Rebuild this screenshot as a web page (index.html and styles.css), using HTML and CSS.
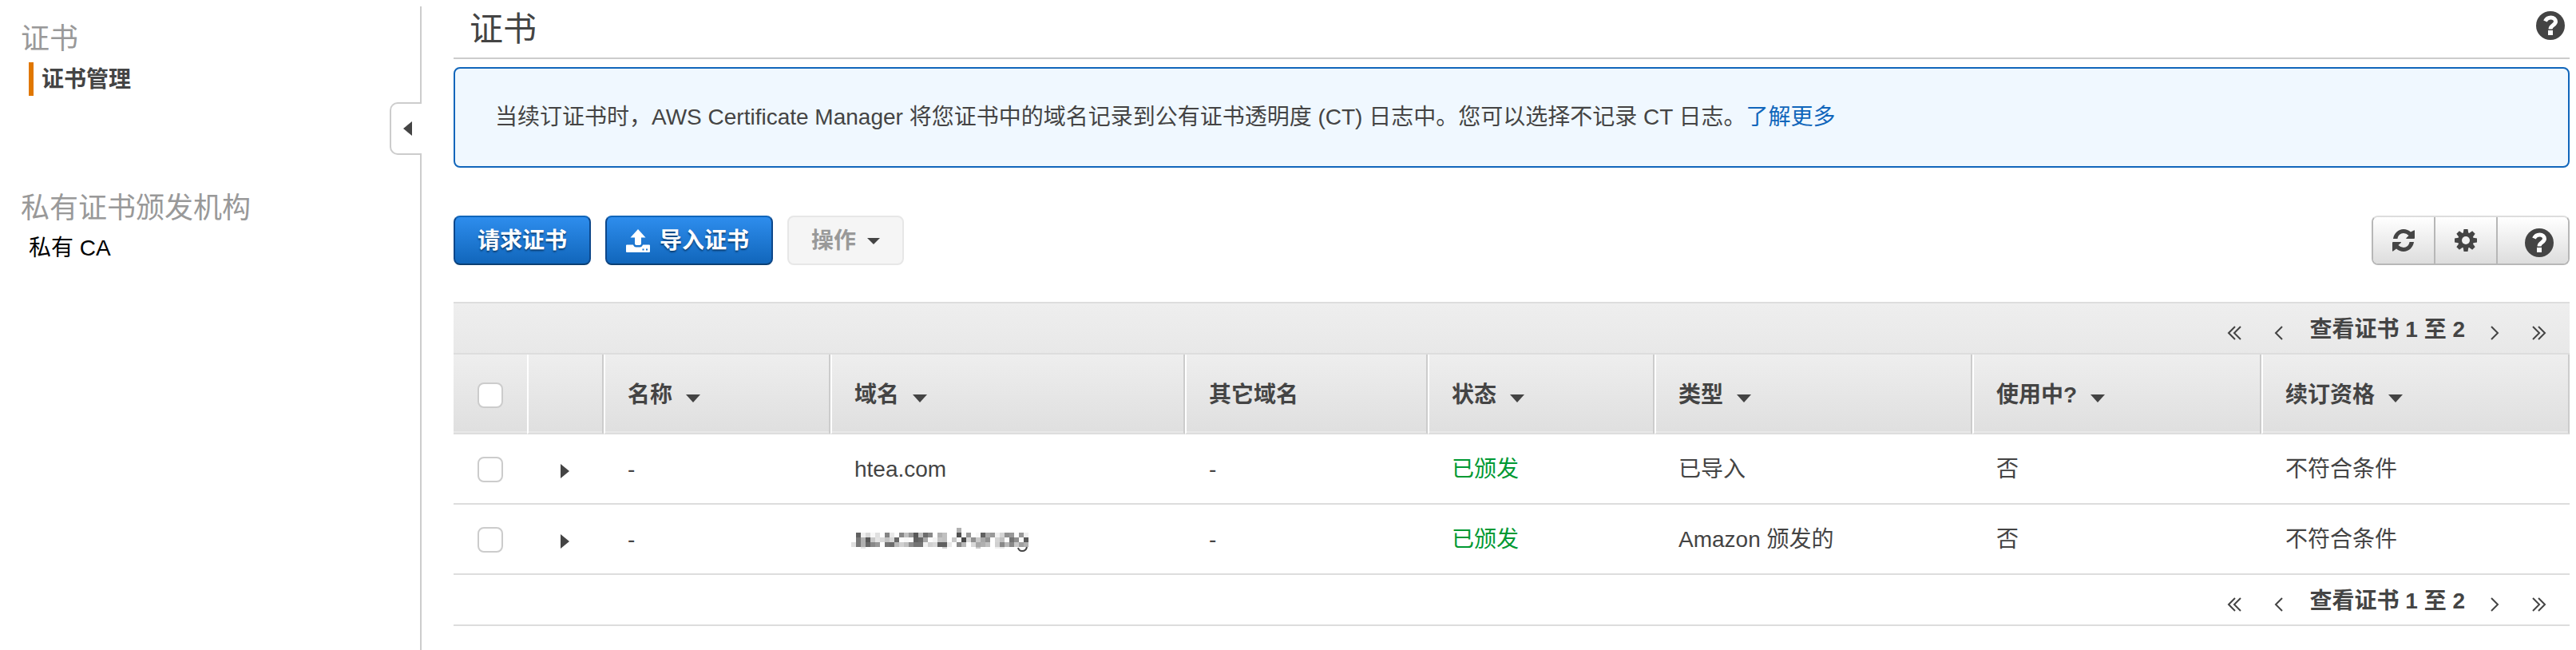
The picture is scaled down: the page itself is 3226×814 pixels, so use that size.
FILE: index.html
```html
<!DOCTYPE html>
<html lang="zh-CN">
<head>
<meta charset="utf-8">
<title>证书</title>
<link rel="stylesheet" href="styles.css">
</head>
<body>
<svg class="sprite" aria-hidden="true">
  <symbol id="help" viewBox="0 0 36 36">
    <circle cx="18" cy="18" r="18" fill="#444"/>
    <path d="M11.500 12.500C13 9 15.500 8 18.500 8c3.500 0 6 2 6 5 0 4.500-6.500 4.500-6.500 9.500" fill="none" stroke="#fff" stroke-width="5"/>
    <path d="M15 24h6v6h-6z" fill="#fff"/>
  </symbol>
  <symbol id="caret" viewBox="0 0 18 10"><path d="M0 0h18l-9 10z" fill="#444"/></symbol>
  <symbol id="first" viewBox="0 0 18 18"><path d="M10 1L2 9l8 8M17 1L9 9l8 8" fill="none" stroke="#444" stroke-width="2"/></symbol>
  <symbol id="prev" viewBox="0 0 18 18"><path d="M13 1L5 9l8 8" fill="none" stroke="#444" stroke-width="2"/></symbol>
  <symbol id="next" viewBox="0 0 18 18"><path d="M5 1l8 8-8 8" fill="none" stroke="#444" stroke-width="2"/></symbol>
  <symbol id="last" viewBox="0 0 18 18"><path d="M1 1l8 8-8 8M8 1l8 8-8 8" fill="none" stroke="#444" stroke-width="2"/></symbol>
  <symbol id="play" viewBox="0 0 11 18"><path d="M0 0l11 9-11 9z" fill="#444"/></symbol>
</svg>
<div class="app">
  <nav class="side">
    <h2 class="side-title">证书</h2>
    <a class="side-link side-link-active" href="#">证书管理</a>
    <h2 class="side-title side-title-next">私有证书颁发机构</h2>
    <a class="side-link" href="#">私有 CA</a>
    <button class="side-toggle" type="button" aria-label="收起"><svg width="11" height="18" viewBox="0 0 11 18"><path d="M11 0L0 9l11 9z" fill="#444"/></svg></button>
  </nav>
  <main class="main">
    <header class="head">
      <h1 class="title">证书</h1>
      <button class="help" type="button" aria-label="帮助"><svg width="36" height="36"><use href="#help"/></svg></button>
    </header>
    <p class="info">当续订证书时，AWS Certificate Manager 将您证书中的域名记录到公有证书透明度 (CT) 日志中。您可以选择不记录 CT 日志。<a class="info-link" href="#">了解更多</a></p>
    <div class="tools">
      <button class="btn btn-primary" type="button">请求证书</button>
      <button class="btn btn-primary btn-import" type="button"><svg width="30" height="30" viewBox="0 0 30 30"><path d="M15 0l9.500 10.500H19V18q0 2-2 2h-4q-2 0-2-2v-7.500H5.500z" fill="#fff"/><path d="M1 19.500h8q1 3 3.500 3h5q2.500 0 3.500-3h8q1 0 1 1V28q0 1-1 1H1q-1 0-1-1v-7.500q0-1 1-1zM20.500 24.500v2h2v-2zM25 24.500v2h2v-2z" fill="#fff" fill-rule="evenodd"/></svg>导入证书</button>
      <button class="btn btn-off" type="button" disabled>操作<svg width="16" height="8" viewBox="0 0 16 8"><path d="M0 0h16L8 8z" fill="#444"/></svg></button>
      <div class="group">
        <button class="tool" type="button" aria-label="刷新"><svg width="28" height="28" viewBox="0 0 28 28" fill="#444"><path d="M1 12C2 5 7.500 0 14 0c3.500 0 6.500 1.200 9 3.500L27 1.500Q28 1 28 2v9q0 1-1 1h-9q-1.500 0-.500-1l3-3Q17.500 5 14 5c-4 0-7 3-7.500 7z"/><path d="M27 16c-1 7-6.500 12-13 12-3.500 0-6.500-1.200-9-3.500L1 27.500Q0 28 0 27v-10q0-1 1-1h9.500q1 0 .300 1L7.500 20q3 3 6.500 3c4 0 7-3 7.500-7z"/></svg></button>
        <button class="tool" type="button" aria-label="设置"><svg width="28" height="28" viewBox="0 0 28 28"><g fill="#444"><circle cx="14" cy="14" r="10"/><g id="teeth"><path id="tooth" d="M10.500 6l1-6h5l1 6zM10.500 22l1 6h5l1-6z"/><use href="#tooth" transform="rotate(90 14 14)"/></g><use href="#teeth" transform="rotate(45 14 14)"/></g><circle cx="14" cy="14" r="5" fill="#f0f0f0"/></svg></button>
        <button class="tool tool-help" type="button" aria-label="帮助"><svg width="36" height="36"><use href="#help"/></svg></button>
      </div>
    </div>
    <section class="list">
      <div class="pager pager-top">
        <button class="page" type="button" aria-label="第一页"><svg width="18" height="18"><use href="#first"/></svg></button>
        <button class="page" type="button" aria-label="上一页"><svg width="18" height="18"><use href="#prev"/></svg></button>
        <span class="page-text">查看证书 1 至 2</span>
        <button class="page" type="button" aria-label="下一页"><svg width="18" height="18"><use href="#next"/></svg></button>
        <button class="page" type="button" aria-label="最后一页"><svg width="18" height="18"><use href="#last"/></svg></button>
      </div>
      <table class="table">
        <colgroup><col class="c-check"><col class="c-open"><col class="c-name"><col class="c-domain"><col class="c-more"><col class="c-name"><col class="c-type"><col class="c-used"><col></colgroup>
        <thead>
          <tr>
            <th class="plain"><input class="check" type="checkbox" aria-label="全选"></th>
            <th></th>
            <th><button class="sort" type="button">名称<svg width="18" height="10"><use href="#caret"/></svg></button></th>
            <th><button class="sort" type="button">域名<svg width="18" height="10"><use href="#caret"/></svg></button></th>
            <th>其它域名</th>
            <th><button class="sort" type="button">状态<svg width="18" height="10"><use href="#caret"/></svg></button></th>
            <th><button class="sort" type="button">类型<svg width="18" height="10"><use href="#caret"/></svg></button></th>
            <th><button class="sort" type="button">使用中?<svg width="18" height="10"><use href="#caret"/></svg></button></th>
            <th><button class="sort" type="button">续订资格<svg width="18" height="10"><use href="#caret"/></svg></button></th>
          </tr>
        </thead>
        <tbody>
          <tr>
            <td><input class="check" type="checkbox" aria-label="选择 htea.com"></td>
            <td class="open-cell"><button class="open" type="button" aria-label="展开"><svg width="11" height="18"><use href="#play"/></svg></button></td>
            <td>-</td><td>htea.com</td><td>-</td><td class="ok">已颁发</td><td>已导入</td><td>否</td><td>不符合条件</td>
          </tr>
          <tr>
            <td><input class="check" type="checkbox" aria-label="选择证书"></td>
            <td class="open-cell"><button class="open" type="button" aria-label="展开"><svg width="11" height="18"><use href="#play"/></svg></button></td>
            <td>-</td><td><svg class="mosaic" id="mosaic" width="222" height="30" viewBox="0 0 222 30" aria-hidden="true"></svg></td><td>-</td><td class="ok">已颁发</td><td>Amazon 颁发的</td><td>否</td><td>不符合条件</td>
          </tr>
        </tbody>
      </table>
      <div class="pager">
        <button class="page" type="button" aria-label="第一页"><svg width="18" height="18"><use href="#first"/></svg></button>
        <button class="page" type="button" aria-label="上一页"><svg width="18" height="18"><use href="#prev"/></svg></button>
        <span class="page-text">查看证书 1 至 2</span>
        <button class="page" type="button" aria-label="下一页"><svg width="18" height="18"><use href="#next"/></svg></button>
        <button class="page" type="button" aria-label="最后一页"><svg width="18" height="18"><use href="#last"/></svg></button>
      </div>
    </section>
  </main>
</div>
<script src="mosaic.js"></script>
</body>
</html>
```
FILE: mosaic.js
```js
// Grey levels of the pixelated domain name, one string per row of 6px cells.
const rows = [
  "ff ff ff ff ff ff ff ff ff ff ff ff ff ff ff ff ff ff ff ff ff ff b0",
  "ff 60 f0 d8 f8 e0 ff 84 e8 fc 88 c0 98 58 c0 6c 88 ff b0 c0 ff ff 50 f8 98 ff f8 60 a8 98 f0 d4 90 98 fc 98 f0",
  "ff 78 b0 58 c8 e4 d8 c4 d8 68 fc f8 fc 60 68 a8 fc f4 c4 c0 ff c8 f8 48 d8 90 c8 a8 90 ff d4 c0 fc 74 90 fc 58",
  "e0 78 b0 68 88 98 ff 74 6c b8 d0 c0 8c 74 74 f0 d0 d8 60 60 e8 ff 88 b8 ff d8 a8 b0 c0 ff d0 88 b8 88 c8 a0 b0",
  "ff ff e8 ff ff ff ff ff ff ff ff ff ff ff ff ff ff ff ff d0 ff ff ff ff ff ff c8 ff ff ff f0 e8"
];
const ns = "http://www.w3.org/2000/svg";
const svg = document.getElementById("mosaic");
rows.forEach((row, y) => row.split(" ").forEach((v, x) => {
  if (v === "ff") return;
  const r = document.createElementNS(ns, "rect");
  r.setAttribute("x", x * 6);
  r.setAttribute("y", y * 6);
  r.setAttribute("width", 6);
  r.setAttribute("height", y === 4 ? 2 : 6);
  r.setAttribute("fill", "#" + v + v + v);
  svg.append(r);
}));
const tail = document.createElementNS(ns, "path");
tail.setAttribute("d", "M209 25q1 4 5 4 5 0 6-5");
tail.setAttribute("fill", "none");
tail.setAttribute("stroke", "#444");
tail.setAttribute("stroke-width", "2");
svg.append(tail);
```
FILE: styles.css
```css
* { box-sizing: border-box; }
body {
  margin: 0;
  background: #fff;
  color: #444;
  font: 28px/32px "Liberation Sans", "Noto Sans CJK SC", sans-serif;
}
h1, h2, p { margin: 0; font-weight: normal; }
button { font: inherit; color: inherit; padding: 0; border: 0; background: none; }
a { text-decoration: none; }
svg { display: block; flex: none; }
.sprite { position: absolute; width: 0; height: 0; }

.app { display: flex; min-height: 100vh; padding: 8px 8px 0 0; }
.side {
  position: relative;
  flex: none;
  display: flex;
  flex-direction: column;
  align-items: flex-start;
  width: 528px;
  padding: 20px 0 0 26px;
  border-right: 2px solid #ccc;
}
.side-title { font-size: 36px; line-height: 42px; color: #999; margin-bottom: 8px; }
.side-title-next { margin-top: 120px; }
.side-link { display: block; margin-left: 10px; color: #000; line-height: 42px; }
.side-link-active { padding: 2px 0 0 10px; line-height: 40px; border-left: 6px solid #e07700; color: #444; font-weight: bold; }
.side-toggle {
  position: absolute;
  top: 120px;
  right: -2px;
  width: 40px;
  height: 66px;
  padding-left: 15px;
  border: 2px solid #ccc;
  border-right: 0;
  border-radius: 10px 0 0 10px;
  background: #fff;
}

.main { flex: 1; min-width: 0; margin-left: 40px; }
.head {
  display: flex;
  justify-content: space-between;
  align-items: flex-start;
  height: 66px;
  padding: 0 6px 0 20px;
  border-bottom: 2px solid #ccc;
}
.title { font-size: 42px; line-height: 58px; }
.help { margin-top: 6px; }
.info {
  margin-top: 10px;
  padding: 45px 50px;
  border: 2px solid #16b;
  border-radius: 8px;
  background: #f0f8ff;
}
.info-link { color: #16b; }

.tools { display: flex; gap: 18px; margin: 60px 0 46px; }
.btn {
  display: flex;
  align-items: center;
  height: 62px;
  padding: 2px 28px 0;
  border: 2px solid #e7e7e7;
  border-radius: 8px;
  font-weight: bold;
}
.btn-primary {
  color: #fff;
  border-color: #1166bb #0d478a #0b3f73;
  background: linear-gradient(#2e8ded, #1166bb);
  text-shadow: 0 2px 2px #0b3f73;
}
.btn-import { gap: 12px; padding-left: 24px; }
.btn-off { gap: 14px; background: #f5f5f5; color: #999; }
.group { display: flex; margin-left: auto; border: 2px solid #b7b7b7; border-top-color: #ddd; border-radius: 8px; overflow: hidden; }
.tool {
  display: flex;
  align-items: center;
  justify-content: center;
  width: 78px;
  border-right: 2px solid #b7b7b7;
  background: linear-gradient(#fff, #ddd);
}
.tool-help { width: 88px; border-right: 0; padding: 6px 0 0 16px; }

.list { border-top: 2px solid #ddd; }
.pager {
  display: flex;
  align-items: center;
  justify-content: flex-end;
  height: 64px;
  padding-right: 29px;
  border-bottom: 2px solid #ddd;
}
.pager-top { background: linear-gradient(#eee, #e8e8e8); }
.page { margin: 12px 0 0 38px; }
.page-text { margin-left: 30px; padding-top: 3px; font-weight: bold; }
.page-text + .page { margin-left: 28px; }

.table { width: 100%; table-layout: fixed; border-collapse: separate; border-spacing: 0; }
.c-check { width: 92px; }
.c-open { width: 96px; }
.c-name { width: 284px; }
.c-domain { width: 444px; }
.c-more { width: 304px; }
.c-type { width: 398px; }
.c-used { width: 362px; }
th, td { padding: 0 0 0 30px; text-align: left; border-bottom: 2px solid #ddd; }
th {
  height: 100px;
  padding: 4px 0 0 28px;
  background: linear-gradient(#eee, #dfdfdf);
  border-left: 2px solid #fff;
  border-right: 2px solid #ccc;
  box-shadow: inset 0 -2px #e8e8e8;
}
.plain { border-left: 0; border-right: 0; padding-left: 30px; }
td { height: 88px; padding-top: 1px; }
.sort { display: flex; align-items: center; gap: 17px; font-weight: bold; }
.sort svg { margin-top: 8px; }
.check {
  appearance: none;
  display: block;
  width: 32px;
  height: 32px;
  margin: 0;
  border: 2px solid #ccc;
  border-radius: 8px;
  background: #fff;
}
.open-cell { padding-left: 42px; }
.open { display: block; margin-top: 4px; }
.ok { color: #093; }
.mosaic { margin-left: -4px; }
```
